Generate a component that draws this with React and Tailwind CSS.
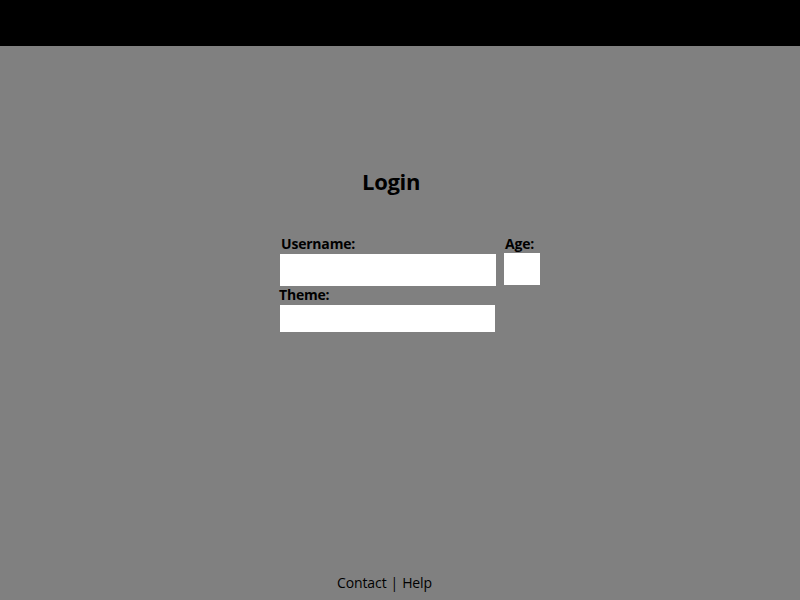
import React from 'react';

const font = { fontFamily: '"Open Sans", "Liberation Sans", sans-serif' };

export default function App() {
  return (
    <div className="min-h-screen h-[600px] flex flex-col bg-[#808080] text-black" style={font}>
      {/* Header */}
      <header className="h-[46px] bg-black shrink-0" />

      {/* Main */}
      <main className="flex flex-col">
        <h1 className="mt-[120px] ml-[362px] text-[22px] font-bold leading-[30px] tracking-[-0.3px]">Login</h1>

        <form className="mt-[38px] ml-[279px] flex flex-col">
          <div className="flex gap-[8px]">
            <div className="flex flex-col">
              <label className="ml-[2px] text-[14px] font-bold leading-[19px] tracking-[-0.2px]">Username:</label>
              <input type="text" className="mt-[1px] w-[216px] h-[32px] ml-[1px] bg-white outline-none border-0" />
            </div>
            <div className="flex flex-col">
              <label className="ml-[1px] text-[14px] font-bold leading-[19px] tracking-[-0.2px]">Age:</label>
              <input type="text" className="w-[36px] h-[32px] bg-white outline-none border-0" />
            </div>
          </div>
          <label className="text-[14px] font-bold leading-[18px] tracking-[-0.2px]">Theme:</label>
          <input type="text" className="mt-[1px] ml-[1px] w-[215px] h-[27px] bg-white outline-none border-0" />
        </form>
      </main>

      {/* Footer */}
      <footer className="mt-auto mb-[7px] flex justify-center pr-[31px] text-[14px] leading-[20px] tracking-[-0.1px]">
        <span>Contact</span>
        <span className="mx-[4px]">|</span>
        <span>Help</span>
      </footer>
    </div>
  );
}
